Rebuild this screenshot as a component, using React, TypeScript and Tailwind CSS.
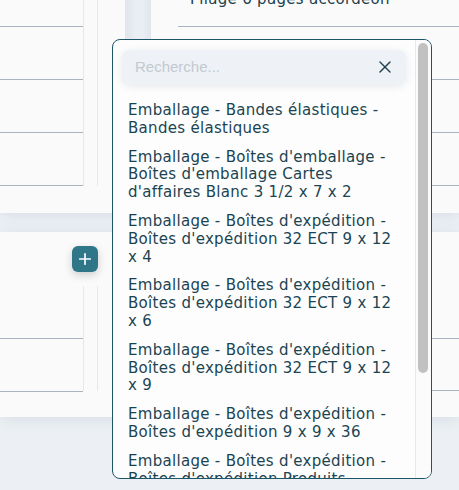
import { X, Plus } from 'lucide-react'

const items = [
  ['Emballage - Bandes élastiques -', 'Bandes élastiques'],
  ['Emballage - Boîtes d\'emballage -', 'Boîtes d\'emballage Cartes', 'd\'affaires Blanc 3 1/2 x 7 x 2'],
  ['Emballage - Boîtes d\'expédition -', 'Boîtes d\'expédition 32 ECT 9 x 12', 'x 4'],
  ['Emballage - Boîtes d\'expédition -', 'Boîtes d\'expédition 32 ECT 9 x 12', 'x 6'],
  ['Emballage - Boîtes d\'expédition -', 'Boîtes d\'expédition 32 ECT 9 x 12', 'x 9'],
  ['Emballage - Boîtes d\'expédition -', 'Boîtes d\'expédition 9 x 9 x 36'],
  ['Emballage - Boîtes d\'expédition -', 'Boîtes d\'expédition Produits', '12 x 12 x 12'],
]

function TableRows({ count }: { count: number }) {
  return (
    <div className="flex">
      <div className="w-[83px]">
        {Array.from({ length: count }).map((_, i) => (
          <div key={i} className="h-[53px] border-b border-[#a9b4c0]" />
        ))}
      </div>
      <div className="w-[15px] border-x border-[#e6e8eb]" />
    </div>
  )
}

export default function App() {
  return (
    <div
      className="relative h-[490px] w-[459px] overflow-hidden bg-[#ecf0f4]"
      style={{ fontFamily: '"DejaVu Sans", Verdana, sans-serif' }}
    >
      <div className="-mt-[26px] flex flex-col gap-[19px]">
        {/* top row */}
        <div className="flex gap-[26px]">
          <div className="h-[239px] w-[125px] shrink-0 bg-[#fafafa] shadow-[2px_2px_14px_rgba(60,90,120,0.12)]">
            <TableRows count={4} />
          </div>
          <div className="h-[239px] flex-1 bg-[#fafafa] pl-[27px] shadow-[0_2px_14px_rgba(60,90,120,0.12)]">
            <div className="flex h-[53px] items-end border-b border-[#a9b4c0] pb-[17px] pl-[12px] text-[15px] leading-[17.6px] tracking-[0.3px] text-[#1d3f4d]">
              Pliage 6 pages accordeon
            </div>
            <div className="h-[53px] border-b border-[#a9b4c0]" />
            <div className="h-[53px] border-b border-[#a9b4c0]" />
            <div className="h-[53px] border-b border-[#a9b4c0]" />
          </div>
        </div>

        {/* bottom row */}
        <div className="flex gap-[26px]">
          <div className="h-[185px] w-[125px] shrink-0 bg-[#fafafa] shadow-[2px_2px_14px_rgba(60,90,120,0.12)]">
            <div className="flex h-[54px] items-center pl-[72px]">
              <button className="flex size-[26px] items-center justify-center rounded-[6px] bg-[#2f7689] text-white shadow-[0_3px_8px_rgba(0,0,0,0.18)]">
                <Plus className="size-[18px]" strokeWidth={2.25} />
              </button>
            </div>
            <div className="flex">
              <div className="w-[83px] pt-[52px]">
                <div className="h-[53px] border-t border-[#a9b4c0]" />
                <div className="border-t border-[#a9b4c0]" />
              </div>
              <div className="h-[105px] w-[15px] border-x border-[#e6e8eb]" />
            </div>
          </div>
          <div className="h-[185px] flex-1 bg-[#fafafa] pl-[27px] pt-[106px] shadow-[0_2px_14px_rgba(60,90,120,0.12)]">
            <div className="h-[52px] border-t border-[#a9b4c0]" />
            <div className="border-t border-[#a9b4c0]" />
          </div>
        </div>
      </div>

      {/* dropdown */}
      <div className="absolute left-[112px] top-[39px] flex h-[440px] w-[320px] overflow-hidden rounded-[8px] border border-[#1c5668] bg-[#fdfdfd]">
        <div className="flex min-w-0 flex-1 flex-col">
          <div className="px-[9px] pt-[10px]">
            <div className="flex h-[34px] items-center justify-between rounded-[8px] bg-[#eef2f6] pl-[13px] pr-[11px] shadow-[0_2px_8px_rgba(40,70,100,0.12)]">
              <span
                className="text-[15px] text-[#c3c9d0]"
                style={{ fontFamily: '"Liberation Sans", Arial, sans-serif' }}
              >
                Recherche...
              </span>
              <X className="size-[20px] text-[#1d3f4d]" strokeWidth={1.6} />
            </div>
          </div>
          <div className="mt-[18px] flex flex-col gap-[11px] px-[15px] text-[15px] leading-[17.8px] tracking-[0.3px] text-[#1b4452]">
            {items.map((lines, i) => (
              <div key={i}>
                {lines.map((l, j) => (
                  <div key={j} className="whitespace-nowrap">{l}</div>
                ))}
              </div>
            ))}
          </div>
        </div>
        <div className="w-[16px] shrink-0 border-l border-[#e8e8e8] bg-[#fbfbfb] pl-[2px] pt-[3px]">
          <div className="h-[330px] w-[10px] rounded-full bg-[#c1c1c1]" />
        </div>
      </div>
    </div>
  )
}
